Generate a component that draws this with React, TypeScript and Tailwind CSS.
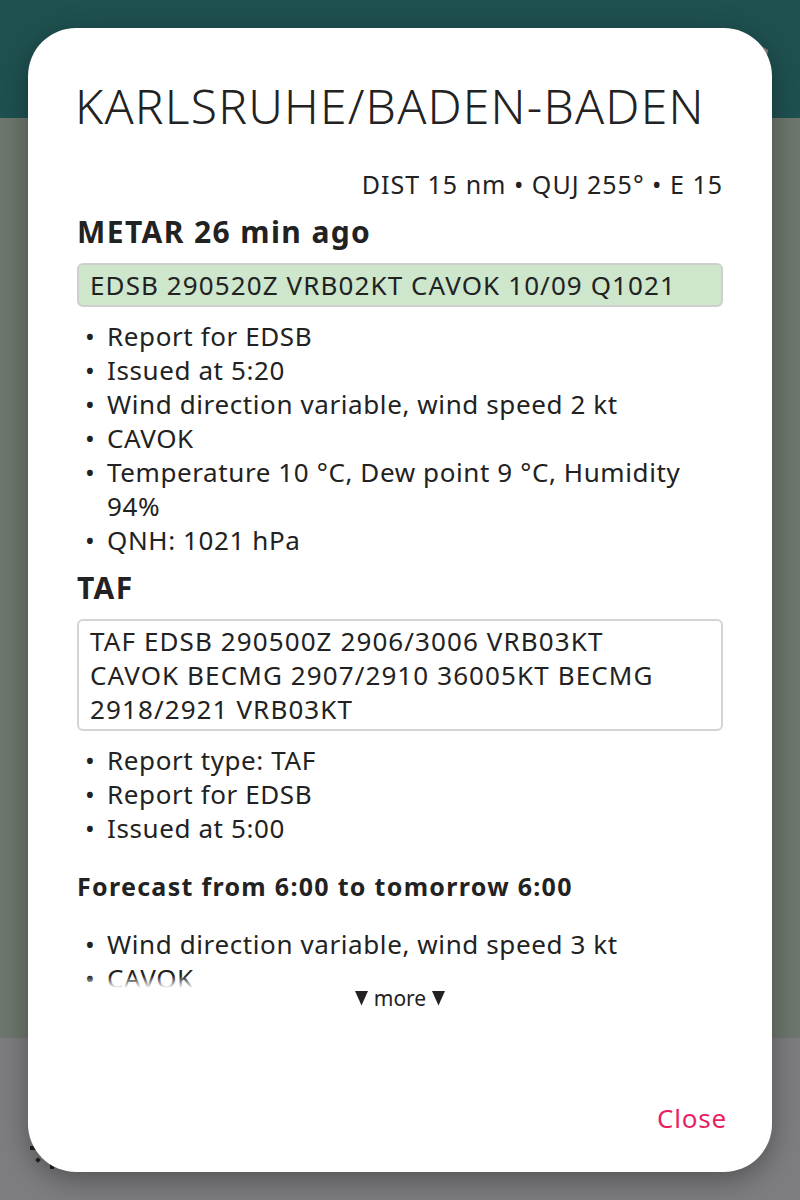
import React from "react";

const font = { fontFamily: '"Noto Sans", "Open Sans", sans-serif' };

function Bullets({ items }: { items: string[] }) {
  return (
    <ul className="flex flex-col">
      {items.map((t, i) => (
        <li key={i} className="flex text-[26px] leading-[34px] tracking-[0.6px] text-[#222]">
          <span className="w-[30px] shrink-0 pl-[8px] tracking-normal">•</span>
          <span>{t}</span>
        </li>
      ))}
    </ul>
  );
}

function Tri() {
  return (
    <svg width="13" height="16" viewBox="0 0 13 16" className="shrink-0">
      <path d="M0 1 L13 1 L6.5 15.5 Z" fill="#222" />
    </svg>
  );
}

export default function App() {
  return (
    <div className="relative w-[800px] h-[1200px] overflow-hidden flex flex-col" style={font}>
      <div className="h-[118px] bg-[#1f5151]" />
      <div className="flex-1 bg-[#6e776e]" />
      <div className="h-[162px] bg-[#7e7d80]" />

      <svg className="absolute left-[752px] top-[40px]" width="18" height="24" viewBox="0 0 18 24">
        <path d="M2 2 L16 10 L14 22 Z" fill="#8a8a8a" />
      </svg>
      <div className="absolute left-[30px] top-[1146px] w-[6px] h-[4px] bg-[#222]" />
      <div className="absolute left-[36px] top-[1158px] w-[4px] h-[4px] rotate-45 bg-[#222]" />
      <div className="absolute left-[50px] top-[1163px] w-[4px] h-[6px] bg-[#222]" />

      <div className="absolute left-[28px] top-[28px] w-[744px] h-[1144px] rounded-[48px] bg-white shadow-[0_8px_30px_rgba(0,0,0,0.35)] flex flex-col pl-[49px] pr-[49px] pt-[50px]">
        <h1 className="text-[48px] leading-[56px] font-light text-[#222] tracking-[1.2px] -ml-[2px]">
          KARLSRUHE/BADEN-BADEN
        </h1>
        <div className="relative">
          <div className="h-[854px] overflow-hidden flex flex-col">
            <div className="mt-[34px] text-right text-[25px] leading-[32px] tracking-[1px] text-[#222]">
              DIST 15 nm • QUJ 255° • E 15
            </div>
            <h2 className="mt-[14px] text-[30px] leading-[36px] font-bold tracking-[1.4px] text-[#222]">METAR 26 min ago</h2>
            <div className="mt-[13px] h-[44px] rounded-[6px] border-2 border-[#cfcfcf] bg-[#cde6cc] px-[11px] text-[26px] leading-[40px] tracking-[1.1px] text-[#222] whitespace-nowrap">
              EDSB 290520Z VRB02KT CAVOK 10/09 Q1021
            </div>
            <div className="mt-[12px]">
              <Bullets
                items={[
                  "Report for EDSB",
                  "Issued at 5:20",
                  "Wind direction variable, wind speed 2 kt",
                  "CAVOK",
                  "Temperature 10 °C, Dew point 9 °C, Humidity 94%",
                  "QNH: 1021 hPa",
                ]}
              />
            </div>
            <h2 className="mt-[13px] text-[30px] leading-[36px] font-bold tracking-[1.4px] text-[#222]">TAF</h2>
            <div className="mt-[13px] rounded-[6px] border-2 border-[#d4d4d4] bg-white pl-[11px] pr-[40px] py-[3px] text-[26px] leading-[34px] tracking-[1.1px] text-[#222]">
              TAF EDSB 290500Z 2906/3006 VRB03KT CAVOK BECMG 2907/2910 36005KT BECMG 2918/2921 VRB03KT
            </div>
            <div className="mt-[12px]">
              <Bullets items={["Report type: TAF", "Report for EDSB", "Issued at 5:00"]} />
            </div>
            <h3 className="mt-[26px] text-[25px] leading-[30px] font-bold tracking-[1.3px] text-[#222]">
              Forecast from 6:00 to tomorrow 6:00
            </h3>
            <div className="mt-[26px]">
              <Bullets items={["Wind direction variable, wind speed 3 kt", "CAVOK"]} />
            </div>
          </div>
          <div className="absolute left-0 right-0 bottom-0 h-[12px] bg-gradient-to-b from-transparent to-white" />
          <div className="absolute left-0 right-0 bottom-[-22px] flex justify-center items-center gap-[6px] h-[24px] text-[#222]">
            <Tri />
            <span className="text-[21px] leading-[24px]">more</span>
            <Tri />
          </div>
        </div>
        <div className="flex-1" />
        <div className="flex justify-end pb-[38px]">
          <button className="text-[26px] leading-[32px] tracking-[0.8px] text-[#e91e63] mr-[-4px]">Close</button>
        </div>
      </div>
    </div>
  );
}
